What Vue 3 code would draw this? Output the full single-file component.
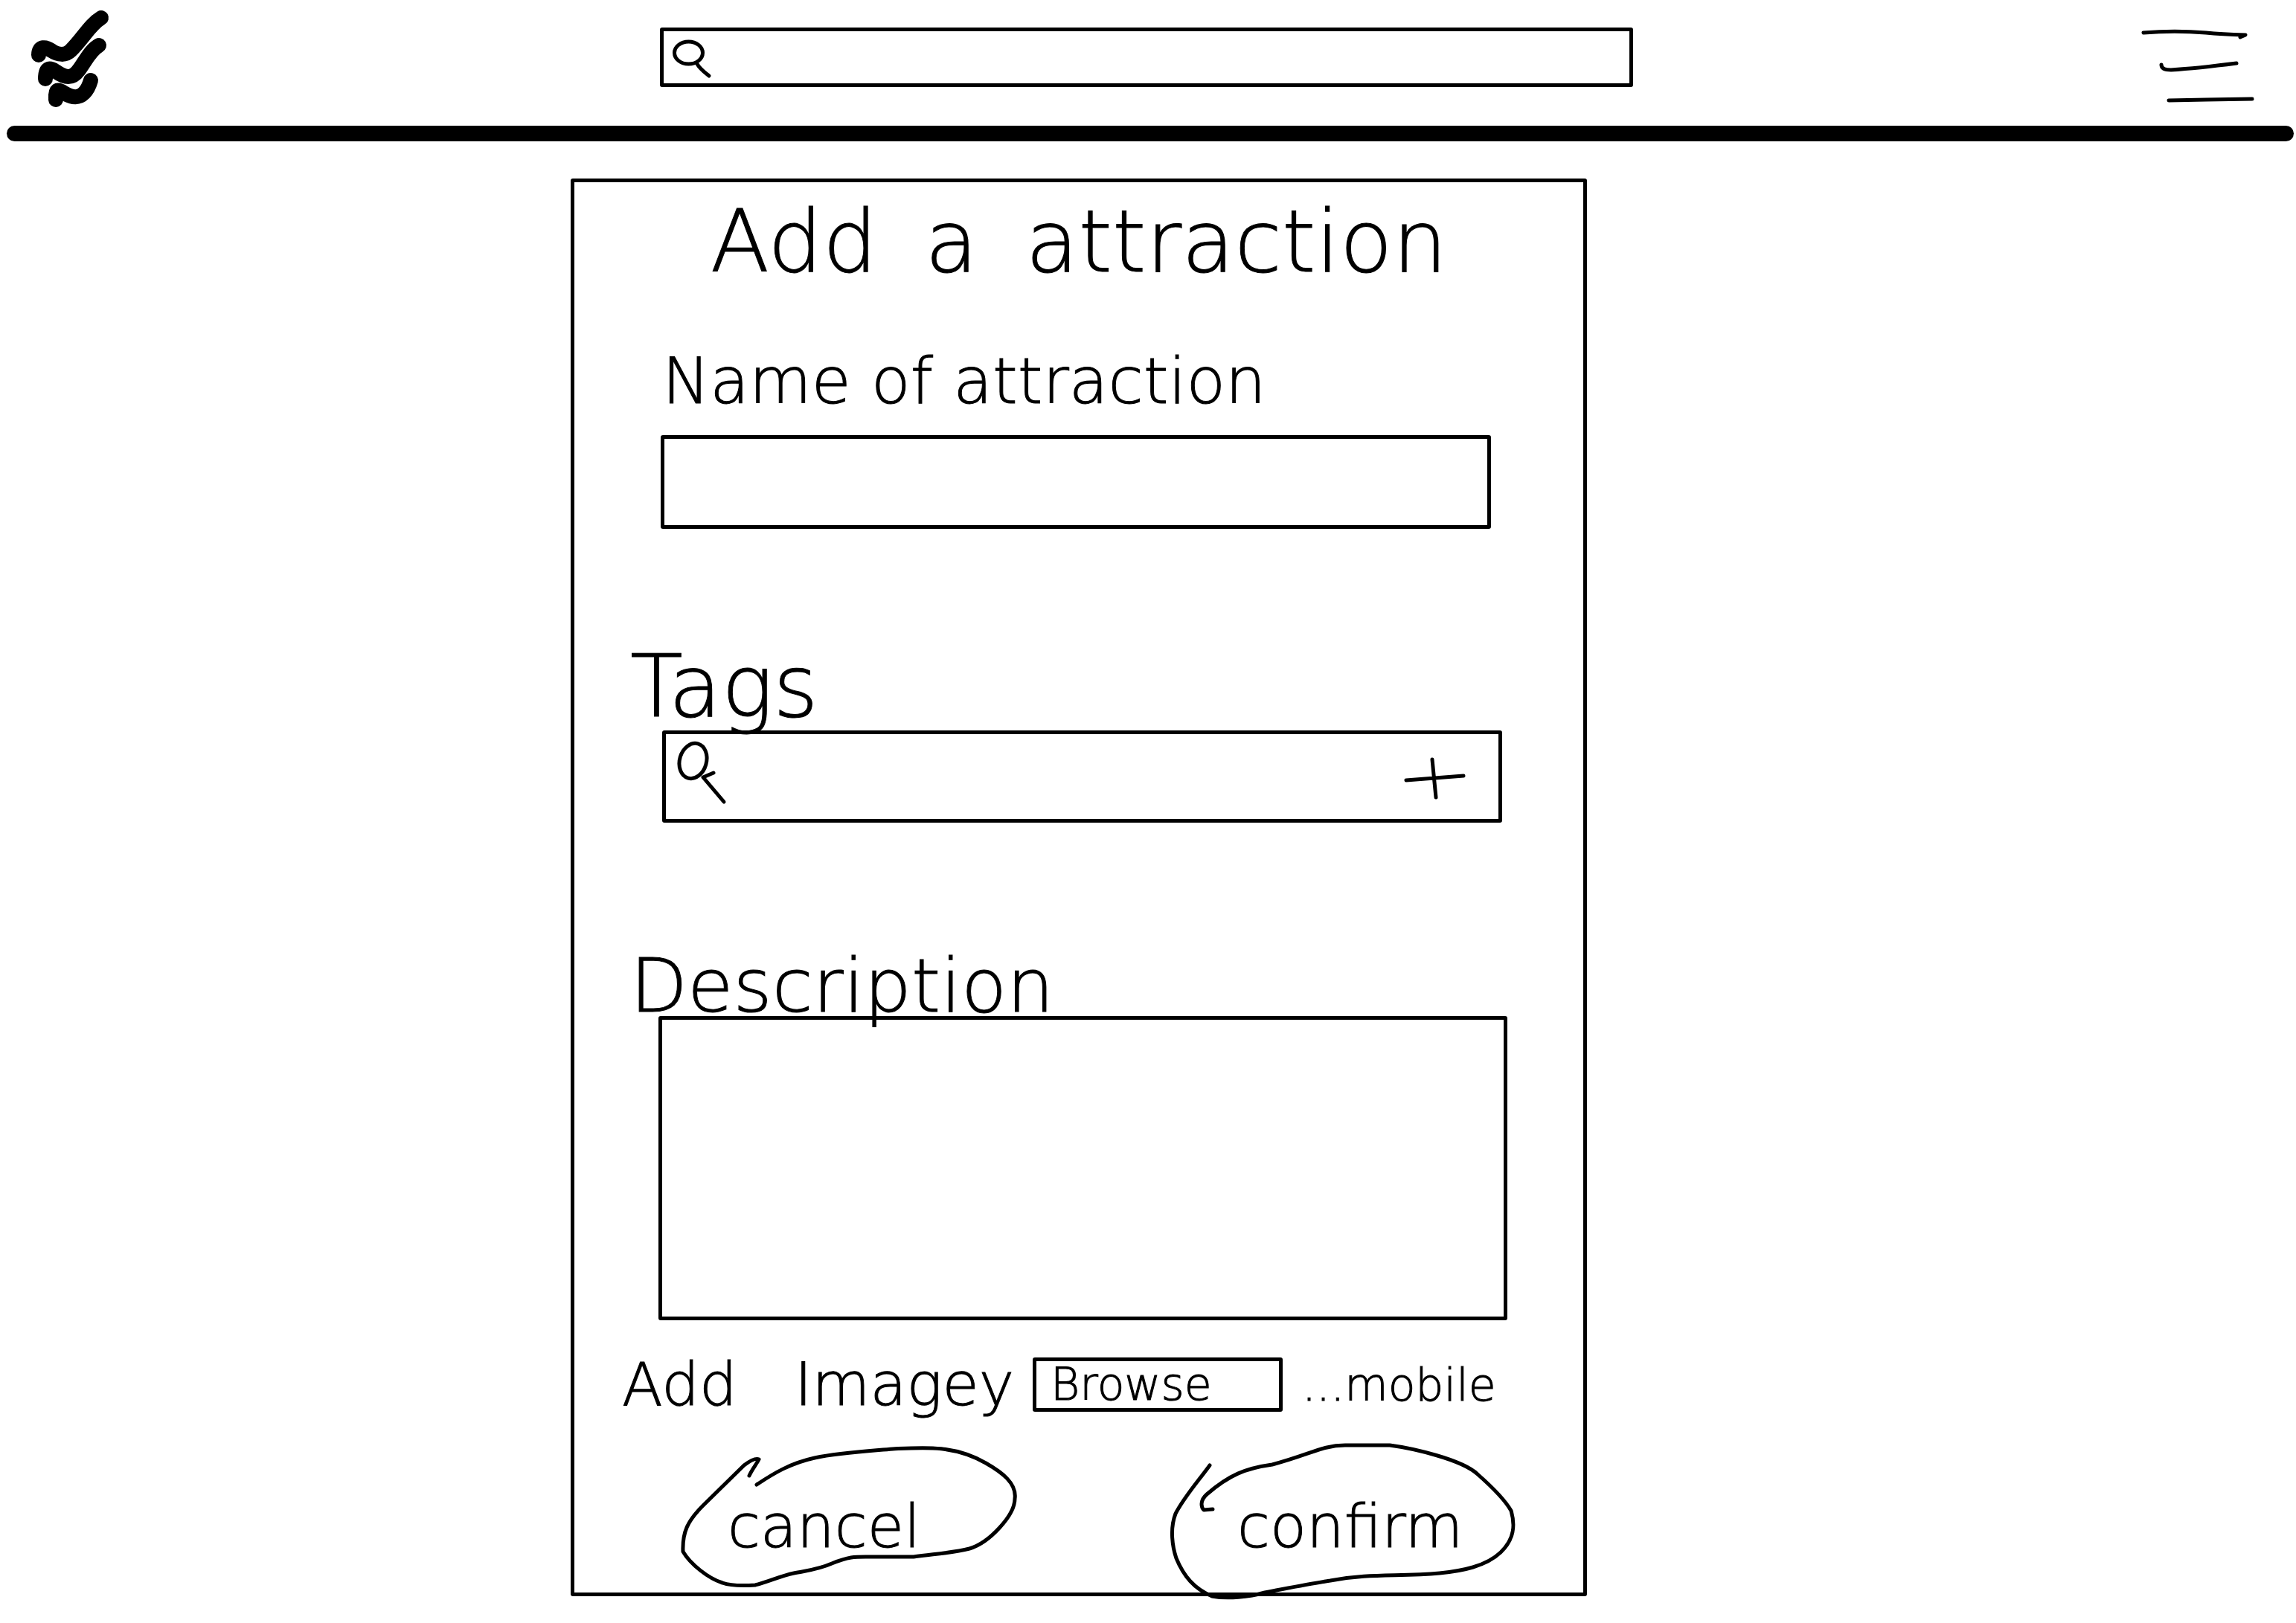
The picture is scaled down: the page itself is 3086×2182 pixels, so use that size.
<script setup>
import { ref } from 'vue'

const query = ref('')
const name = ref('')
const tags = ref('')
const description = ref('')
</script>

<template>
  <div class="page">
    <header class="header">
      <a class="logo" href="#" aria-label="Home">
        <svg width="110" height="130" viewBox="40 12 110 130">
          <path d="M52 74 C52 61 62 63 69 68 C78 74 88 75 95 68 C112 51 121 33 136 24" />
          <path d="M61 106 C61 91 66 90 75 96 C89 106 98 105 106 94 C116 80 122 67 133 61" />
          <path d="M75 134 C74 120 77 119 86 125 C98 132 106 132 113 125 C118 120 120 115 122 108" />
        </svg>
      </a>
      <div class="search">
        <svg width="60" height="60" viewBox="900 47 60 60" aria-hidden="true">
          <ellipse cx="925.5" cy="71" rx="19" ry="15" />
          <path d="M937 86 C941 93 948 98 953 102" />
        </svg>
        <input v-model="query" type="search" aria-label="Search" />
      </div>
      <button class="menu" type="button" aria-label="Menu">
        <svg width="156" height="110" viewBox="2876 36 156 110">
          <path d="M2881 44 C2915 41 2942 42 2965 44 Q2985 46 3018 47 L3011 50" />
          <path d="M2905 87 Q2905 94 2918 94 C2950 92 2975 89 3006 85" />
          <path d="M2915 135 L2965 134 L3027 133" />
        </svg>
      </button>
    </header>
    <hr class="rule" />

    <main class="main">
      <form class="card" @submit.prevent>
        <h1 class="title"><span>Add</span> <span>a</span> <span>attraction</span></h1>

        <div class="field field-name">
          <label for="name">Name of attraction</label>
          <input id="name" v-model="name" type="text" />
        </div>

        <div class="field field-tags">
          <label for="tags">Tags</label>
          <div class="tag-box">
            <svg width="70" height="90" viewBox="908 999 70 90" aria-hidden="true">
              <ellipse cx="931.5" cy="1023" rx="18" ry="24" transform="rotate(16 931.5 1023)" />
              <path d="M959 1039 L945 1045 L973 1078" />
            </svg>
            <input id="tags" v-model="tags" type="text" />
            <button type="button" aria-label="Add tag">
              <svg width="84" height="60" viewBox="1886 1014 84 60">
                <path d="M1890 1049 L1967 1043 M1925 1021 L1930 1072" />
              </svg>
            </button>
          </div>
        </div>

        <div class="field field-description">
          <label for="description">Description</label>
          <textarea id="description" v-model="description"></textarea>
        </div>

        <div class="upload">
          <label for="browse"><span>Add</span> <span>Imagey</span></label>
          <button id="browse" type="button">Browse</button>
          <span class="hint">...mobile</span>
        </div>

        <div class="actions">
          <button class="cancel" type="button">
            <svg width="452" height="206" viewBox="915 1944 452 206" aria-hidden="true">
              <path d="M1007 1984 C1011 1975 1017 1968 1020 1962 C1016 1960 1008 1964 1000 1970 L945 2024 C924 2045 917 2060 918 2086 C928 2103 952 2122 971 2128 Q985 2133 1015 2131 C1035 2126 1048 2119 1067 2115 C1087 2111 1100 2110 1118 2102 C1143 2092 1150 2093 1170 2093 L1228 2093 C1257 2089 1280 2088 1303 2082 C1330 2074 1364 2037 1364 2015 C1367 1994 1346 1979 1325 1967 C1282 1942 1240 1946 1200 1948 C1165 1951 1128 1953 1095 1960 C1063 1967 1041 1980 1017 1996" />
            </svg>
            cancel
          </button>
          <button class="confirm" type="submit">
            <svg width="464" height="206" viewBox="1573 1944 464 206" aria-hidden="true">
              <path d="M1626 1970 C1610 1992 1592 2012 1580 2035 C1572 2056 1576 2080 1581 2095 C1591 2119 1605 2136 1629 2146 C1650 2150 1679 2147 1700 2141 C1732 2135 1762 2129 1788 2125 C1842 2115 1878 2120 1935 2115 C1965 2112 1997 2106 2017 2087 C2037 2068 2036 2048 2031 2031 C2022 2015 2003 1997 1986 1982 C1965 1962 1898 1947 1868 1943 L1808 1943 C1777 1943 1760 1956 1710 1969 C1674 1974 1652 1983 1622 2009 C1613 2017 1614 2026 1618 2030 L1630 2029" />
            </svg>
            confirm
          </button>
        </div>
      </form>
    </main>
  </div>
</template>

<style>
body {
  margin: 0;
  background: #fff;
}
</style>

<style scoped>
.page {
  box-sizing: border-box;
  padding-bottom: 36px;
  color: #000;
  font-family: "DejaVu Sans", sans-serif;
  font-weight: 200;
  -webkit-text-stroke: 1px #000;
}

.page * {
  box-sizing: border-box;
}

svg {
  display: block;
  flex: none;
  overflow: visible;
  fill: none;
  stroke: #000;
  stroke-width: 5;
  stroke-linecap: round;
  stroke-linejoin: round;
}

button,
input,
textarea {
  margin: 0;
  padding: 0;
  border: 0;
  background: transparent;
  color: inherit;
  font: inherit;
  outline: none;
}

button {
  cursor: pointer;
}

.header {
  display: grid;
  grid-template-columns: 887fr 1308fr 891fr;
  align-items: start;
  height: 169px;
}

.logo {
  justify-self: start;
  margin: 12px 0 0 40px;
}

.logo svg {
  stroke-width: 20;
}

.search {
  display: flex;
  align-items: center;
  height: 80px;
  margin-top: 37px;
  padding-left: 8px;
  border: 5px solid #000;
  border-radius: 3px;
}

.search input {
  flex: 1;
  min-width: 0;
  height: 100%;
  font-size: 40px;
}

.menu {
  justify-self: end;
  margin: 36px 54px 0 0;
}

.rule {
  height: 21px;
  margin: 0 3px 0 9px;
  border: 0;
  border-radius: 11px;
  background: #000;
}

.main {
  display: grid;
  grid-template-columns: 767fr 1366fr 953fr;
  padding-top: 50px;
}

.card {
  grid-column: 2;
  padding: 20px 0 7px;
  border: 5px solid #000;
  border-radius: 3px;
}

.title {
  display: flex;
  justify-content: center;
  gap: 64px;
  margin: 0;
  font-size: 116px;
  font-weight: 200;
  line-height: 120px;
}

.field {
  display: flex;
  flex-direction: column;
}

.field > label {
  align-self: flex-start;
  margin-left: 75px;
  font-size: 100px;
  line-height: 80px;
}

.field > input,
.tag-box,
.field > textarea {
  border: 5px solid #000;
  border-radius: 3px;
}

.field > input,
.tag-box input,
.field > textarea {
  font-size: 60px;
}

.field-name {
  margin-top: 77px;
}

.field-name > label {
  margin-left: 118px;
  font-size: 86px;
  line-height: 100px;
}

.field-name > input {
  height: 126px;
  margin: 23px 124px 0 116px;
  padding: 0 20px;
}

.field-tags {
  margin-top: 172px;
}

.field-tags > label {
  font-size: 116px;
}

.tag-box {
  display: flex;
  align-items: center;
  height: 124px;
  margin: 19px 109px 0 118px;
  padding: 0 44px 0 13px;
}

.tag-box input {
  flex: 1;
  min-width: 0;
  height: 100%;
}

.field-description {
  margin-top: 180px;
}

.field-description > textarea {
  height: 409px;
  margin: 0 102px 0 113px;
  padding: 20px;
  resize: none;
}

.upload {
  display: flex;
  align-items: center;
  height: 73px;
  margin: 50px 0 0 64px;
  font-size: 60px;
}

.upload label {
  display: flex;
  justify-content: space-between;
  width: 527px;
  margin-right: 25px;
  font-size: 80px;
}

.upload button {
  width: 336px;
  height: 73px;
  padding-left: 19px;
  border: 5px solid #000;
  border-radius: 3px;
  text-align: left;
  line-height: 63px;
}

.hint {
  margin-left: 26px;
}

.actions {
  display: flex;
  justify-content: space-between;
  margin: 46px 91px 0 143px;
}

.actions button {
  position: relative;
  height: 190px;
  padding-top: 28px;
  font-size: 80px;
  line-height: 80px;
  text-align: left;
}

.actions svg {
  position: absolute;
  top: 0;
  left: 0;
}

.cancel {
  width: 452px;
  padding-left: 63px;
}

.confirm {
  width: 464px;
  padding-left: 90px;
}
</style>
